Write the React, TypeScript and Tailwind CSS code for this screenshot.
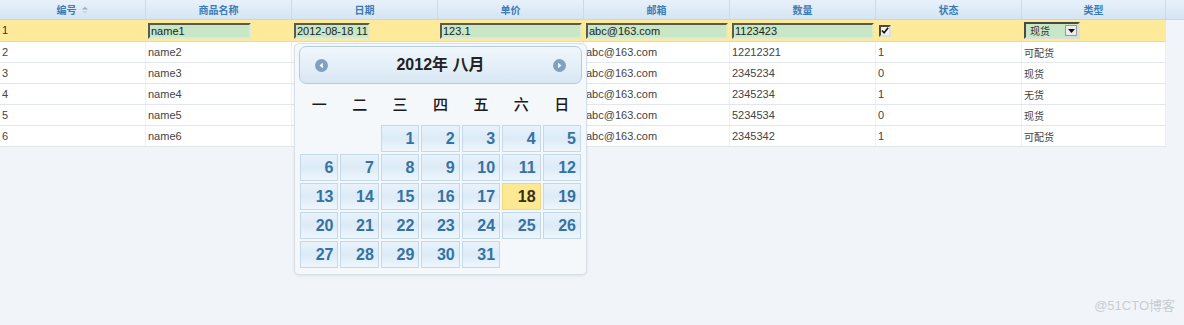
import React from "react";

const cols = ["编号", "商品名称", "日期", "单价", "邮箱", "数量", "状态", "类型"];
const rows = [
  ["2", "name2", "", "", "abc@163.com", "12212321", "1", "可配货"],
  ["3", "name3", "", "", "abc@163.com", "2345234", "0", "现货"],
  ["4", "name4", "", "", "abc@163.com", "2345234", "1", "无货"],
  ["5", "name5", "", "", "abc@163.com", "5234534", "0", "现货"],
  ["6", "name6", "", "", "abc@163.com", "2345342", "1", "可配货"],
];

const font = { fontFamily: '"Liberation Sans", "Noto Sans CJK SC", sans-serif' };

function Inp({ w, v }: { w: string; v: string }) {
  return (
    <div
      className={`${w} h-[16px] bg-[#c7e7c7] border-2 border-t-[#5a5a4a] border-l-[#5a5a4a] border-b-[#e2e8c8] border-r-[#e2e8c8] text-[11px] leading-[12px] text-[#222] pl-[1px] overflow-hidden whitespace-nowrap`}
    >
      {v}
    </div>
  );
}

function Arrow({ dir }: { dir: "l" | "r" }) {
  return (
    <svg width="13" height="13" viewBox="0 0 13 13">
      <circle cx="6.5" cy="6.5" r="6.5" fill="#7fa2c2" />
      {dir === "l" ? (
        <path d="M7.8 3.8 L4.6 6.5 L7.8 9.2 Z" fill="#fff" />
      ) : (
        <path d="M5.2 3.8 L8.4 6.5 L5.2 9.2 Z" fill="#fff" />
      )}
    </svg>
  );
}

function Calendar() {
  const days: (number | null)[] = [null, null, ...Array.from({ length: 31 }, (_, i) => i + 1)];
  const wk = ["一", "二", "三", "四", "五", "六", "日"];
  return (
    <div className="absolute left-[294px] top-[43px] w-[293px] h-[232px] bg-[#f4f8fb] border border-[#d7e0e8] rounded-[5px] shadow-[0_1px_3px_rgba(0,0,0,0.08)] px-[4px] pt-[2px]">
      <div className="h-[38px] rounded-[7px] border border-[#b3cbe1] bg-gradient-to-b from-[#f1f7fc] to-[#d8e7f4] flex items-center justify-between px-[15px]">
        <Arrow dir="l" />
        <div className="text-[16px] font-bold text-[#222]" style={{ fontFamily: '"Liberation Sans", "Noto Sans CJK SC", sans-serif' }}>
          2012年 八月
        </div>
        <Arrow dir="r" />
      </div>
      <div className="grid grid-cols-7 gap-x-[2px] h-[41px] items-center px-[1px]">
        {wk.map((d) => (
          <div key={d} className="text-center text-[15px] text-[#1a1a1a] font-medium" style={{ fontFamily: '"Noto Sans CJK SC", sans-serif' }}>
            {d}
          </div>
        ))}
      </div>
      <div className="grid grid-cols-7 gap-[2px] px-[1px]">
        {days.map((d, i) =>
          d === null ? (
            <div key={i} className="h-[27px]" />
          ) : (
            <div
              key={i}
              className={`h-[27px] border text-right pr-[4px] text-[16px] font-bold leading-[25px] ${
                d === 18
                  ? "bg-[#fde993] border-[#f0d77a] text-[#3a2e10]"
                  : "bg-gradient-to-b from-[#e8f2fb] via-[#dcebf7] to-[#eef6fc] border-[#c3d8ea] text-[#3572a2]"
              }`}
              style={{ fontFamily: '"Liberation Sans", sans-serif' }}
            >
              {d}
            </div>
          )
        )}
      </div>
    </div>
  );
}

export default function App() {
  return (
    <div className="relative w-[1184px] h-[325px] bg-[#f1f5f9] overflow-hidden" style={font}>
      <div className="flex h-[20px] bg-gradient-to-b from-[#e8f1fa] to-[#d5e5f3] border-b border-[#c4d7e8]">
        {cols.map((c, i) => (
          <div
            key={c}
            className={`${i === 7 ? "w-[144px]" : "w-[146px]"} border-r border-[#c8dbeb] flex items-center justify-center text-[10px] font-bold text-[#3b7cb8]`}
            style={{ fontFamily: '"Noto Sans CJK SC", sans-serif' }}
          >
            {c}
            {i === 0 && (
              <svg width="8" height="8" viewBox="0 0 8 8" className="ml-[4px]">
                <path d="M1 3.5 L4 0.8 L7 3.5 Z" fill="#8fb0cc" />
                <path d="M1 5 L4 7.7 L7 5 Z" fill="#c6d7e6" />
              </svg>
            )}
          </div>
        ))}
        <div className="flex-1" />
      </div>
      <div className="w-[1166px] bg-white">
        <div className="flex h-[22px] bg-[#feea9b] border-b border-[#f3db7a] text-[11px] text-[#333] items-center">
          <div className="w-[146px] pl-[2px]">1</div>
          <div className="w-[146px] pl-[2px]"><Inp w="w-[103px]" v="name1" /></div>
          <div className="w-[146px] pl-[2px]"><Inp w="w-[76px]" v="2012-08-18 11:" /></div>
          <div className="w-[146px] pl-[2px]"><Inp w="w-[142px]" v="123.1" /></div>
          <div className="w-[146px] pl-[2px]"><Inp w="w-[142px]" v="abc@163.com" /></div>
          <div className="w-[146px] pl-[2px]"><Inp w="w-[142px]" v="1123423" /></div>
          <div className="w-[146px] pl-[3px]">
            <div className="w-[12px] h-[12px] border-2 border-t-[#4a4a40] border-l-[#4a4a40] border-b-[#ddd] border-r-[#ddd] bg-[#f3f3ec] flex items-center justify-center">
              <svg width="9" height="9" viewBox="0 0 9 9">
                <path d="M1 4.5 L3.5 7 L8 1.5" stroke="#111" strokeWidth="1.8" fill="none" />
              </svg>
            </div>
          </div>
          <div className="w-[144px] pl-[2px]">
            <div className="w-[56px] h-[17px] border-2 border-t-[#4a4a40] border-l-[#4a4a40] border-b-[#ddd] border-r-[#ddd] bg-[#c7e7c7] flex items-center justify-between pl-[4px] pr-[1px]">
              <span className="text-[10px] text-[#333]" style={{ fontFamily: '"Noto Sans CJK SC", sans-serif' }}>现货</span>
              <div className="w-[12px] h-[11px] bg-[#ececec] border border-[#999] flex items-center justify-center">
                <svg width="7" height="4" viewBox="0 0 7 4"><path d="M0 0 L7 0 L3.5 4 Z" fill="#111" /></svg>
              </div>
            </div>
          </div>
        </div>
        {rows.map((r) => (
          <div key={r[0]} className="flex h-[21px] border-b border-[#e1e7ed] items-center text-[11px] text-[#444]">
            {r.map((v, i) => (
              <div
                key={i}
                className={`${i === 7 ? "w-[144px]" : "w-[146px]"} h-full flex items-center pl-[2px] border-r border-[#edf1f5]`}
                style={i === 7 ? { fontFamily: '"Noto Sans CJK SC", sans-serif', fontSize: "10px" } : undefined}
              >
                {v}
              </div>
            ))}
          </div>
        ))}
      </div>
      <Calendar />
      <div className="absolute right-[9px] bottom-[10px] text-[13px] text-[#c9cdd2]" style={font}>
        @51CTO博客
      </div>
    </div>
  );
}
